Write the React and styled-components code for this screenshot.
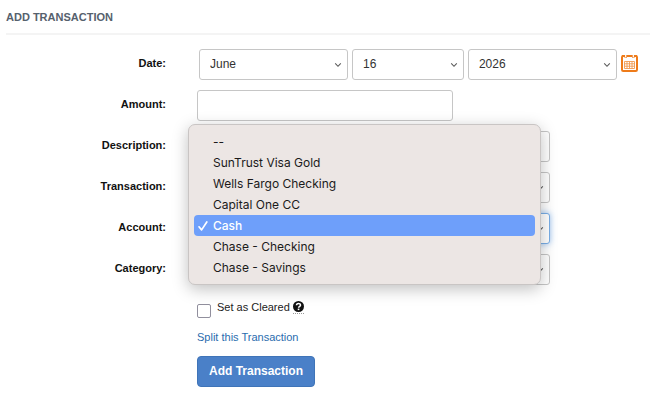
import React, { useState } from 'react'
import styled, { createGlobalStyle } from 'styled-components'

const accounts = [
  '--',
  'SunTrust Visa Gold',
  'Wells Fargo Checking',
  'Capital One CC',
  'Cash',
  'Chase - Checking',
  'Chase - Savings',
]

const months = ['January', 'February', 'March', 'April', 'May', 'June', 'July',
  'August', 'September', 'October', 'November', 'December']
const days = Array.from({ length: 31 }, (_, i) => String(i + 1))
const years = ['2024', '2025', '2026', '2027']

const Chevron = () => (
  <svg width="8" height="6" viewBox="0 0 8 6" fill="none" stroke="#5a5a5a" strokeWidth="1.1" aria-hidden="true">
    <path d="M1.2 1.3L4 4.3L6.8 1.3" />
  </svg>
)

const CalendarIcon = () => (
  <svg width="17" height="17" viewBox="0 0 17 17" aria-hidden="true">
    <rect x="1" y="1" width="15" height="15" rx="1.2" fill="#fff" stroke="#ee7b1a" strokeWidth="2" />
    <path d="M1 0H3.6V3H5.8V0H11.2V3H13.4V0H16V2H1Z" fill="#ee7b1a" />
    <path d="M4.1 0H5.3V2.4H4.1ZM11.7 0H12.9V2.4H11.7Z" fill="#fff" />
    <path d="M3.5 6.5H13.5V13.5H3.5ZM3.5 8.8H13.5M3.5 11.2H13.5M6 6.5V13.5M8.5 6.5V13.5M11 6.5V13.5" fill="none" stroke="#f19a50" strokeWidth="0.9" />
  </svg>
)

const CheckIcon = () => (
  <svg width="10" height="10" viewBox="0 0 10 10" fill="none" stroke="#fff" strokeWidth="1.7" strokeLinecap="round" strokeLinejoin="round" aria-hidden="true">
    <path d="M1 5.8L3.6 8.9L8.8 1" />
  </svg>
)

const HelpIcon = () => (
  <svg width="11" height="11" viewBox="0 0 10 10" aria-hidden="true">
    <circle cx="5" cy="5" r="5" fill="#111" />
    <path d="M3.2 3.9C3.2 1.7 6.8 1.7 6.8 3.8C6.8 5 5.1 4.9 5.1 6.2" fill="none" stroke="#fff" strokeWidth="1.4" />
    <rect x="4.3" y="6.9" width="1.5" height="1.4" fill="#fff" />
  </svg>
)

const Select = ({ id, label, options, grow, focused, ...rest }) => (
  <SelectWrap $grow={grow}>
    <SelectBox id={id} aria-label={label} $focused={focused} {...rest}>
      {options.map(option => <option key={option}>{option}</option>)}
    </SelectBox>
    <Arrow><Chevron /></Arrow>
  </SelectWrap>
)

const App = () => {
  const [account, setAccount] = useState('Cash')
  const [open, setOpen] = useState(true)

  const pick = (name) => {
    setAccount(name)
    setOpen(false)
  }

  return (
    <>
      <GlobalStyle />
      <Page>
        <Title>ADD TRANSACTION</Title>
        <Form onSubmit={e => e.preventDefault()}>
          <Row>
            <Label htmlFor="month">Date:</Label>
            <DateFields>
              <Select id="month" options={months} defaultValue="June" grow={4} />
              <Select label="Day" options={days} defaultValue="16" grow={3} />
              <Select label="Year" options={years} defaultValue="2026" grow={4} />
              <IconButton type="button" aria-label="Open calendar"><CalendarIcon /></IconButton>
            </DateFields>
          </Row>
          <Row>
            <Label htmlFor="amount">Amount:</Label>
            <Field $width="58%"><Input id="amount" type="text" /></Field>
          </Row>
          <Row>
            <Label htmlFor="description">Description:</Label>
            <Field><Input id="description" type="text" /></Field>
          </Row>
          <Row>
            <Label htmlFor="transaction">Transaction:</Label>
            <Field><Select id="transaction" options={['', 'Withdrawal', 'Deposit']} /></Field>
          </Row>
          <Row>
            <Label htmlFor="account">Account:</Label>
            <Field>
              <Select id="account" options={accounts} value={account} focused
                onChange={e => setAccount(e.target.value)} />
              {open && (
                <Menu role="listbox" aria-label="Account">
                  {accounts.map(name => (
                    <Option key={name} role="option" aria-selected={name === account}
                      $active={name === account} onClick={() => pick(name)}>
                      <Mark>{name === account && <CheckIcon />}</Mark>
                      {name}
                    </Option>
                  ))}
                </Menu>
              )}
            </Field>
          </Row>
          <Row>
            <Label htmlFor="category">Category:</Label>
            <Field><Select id="category" options={['', 'Groceries', 'Rent']} /></Field>
          </Row>
          <Actions>
            <Cleared>
              <Checkbox id="cleared" type="checkbox" />
              <label htmlFor="cleared">Set as Cleared</label>
              <Help title="Cleared transactions have posted to your account"><HelpIcon /></Help>
            </Cleared>
            <SplitLink href="#split">Split this Transaction</SplitLink>
            <Submit type="submit">Add Transaction</Submit>
          </Actions>
        </Form>
      </Page>
    </>
  )
}

export default App


const GlobalStyle = createGlobalStyle`
  * {
    box-sizing: border-box;
  }
  body {
    margin: 0;
    background: #fff;
    color: #222;
    font-family: "Liberation Sans", Arial, sans-serif;
    font-size: 11px;
  }
`

const Page = styled.main`
  padding: 10px 0 16px 6px;
`

const Title = styled.h1`
  margin: 0;
  padding-bottom: 9px;
  border-bottom: 2px solid #f4f4f4;
  color: #56616d;
  font-size: 11px;
  line-height: 14px;
`

const Form = styled.form`
  display: flex;
  flex-direction: column;
  gap: 10px;
  padding: 14px 12px 0 0;
`

const Row = styled.div`
  display: grid;
  grid-template-columns: 160px 1fr;
  column-gap: 31px;
`

const Label = styled.label`
  padding-top: 7px;
  color: #111;
  font-weight: bold;
  line-height: 14px;
  text-align: right;
`

const Field = styled.div`
  position: relative;
  width: ${props => props.$width || '80%'};
`

const DateFields = styled.div`
  display: flex;
  align-items: center;
  gap: 4px;
  padding-left: 2px;
`

const SelectWrap = styled.div`
  position: relative;
  flex: ${props => props.$grow || 1} 1 0;
`

const Input = styled.input`
  display: block;
  width: 100%;
  height: 31px;
  padding: 0 11px;
  border: 1px solid #c6c6c6;
  border-radius: 3px;
  background: #fff;
  color: #333;
  font-family: inherit;
  font-size: 12px;
`

const SelectBox = styled(Input).attrs({ as: 'select' })`
  appearance: none;
  padding: 0 20px 2px 10px;
  ${props => props.$focused && `
    border-color: #79aee6;
    box-shadow: 0 0 6px rgba(82, 150, 230, 0.6);
    outline: none;
  `}
`

const Arrow = styled.span`
  position: absolute;
  top: 0;
  bottom: 0;
  right: 6px;
  display: flex;
  align-items: center;
  pointer-events: none;
`

const IconButton = styled.button`
  display: flex;
  padding: 0 0 3px;
  border: 0;
  background: none;
  cursor: pointer;
`

const Menu = styled.ul`
  position: absolute;
  z-index: 1;
  top: -89px;
  left: -9px;
  width: 100%;
  margin: 0;
  padding: 6px 5px;
  border: 1px solid #c9c5c4;
  border-radius: 7px;
  background: #ece6e4;
  box-shadow: 0 4px 16px rgba(0, 0, 0, 0.25);
  list-style: none;
`

const Option = styled.li`
  display: flex;
  align-items: center;
  height: 21px;
  padding-left: 4px;
  border-radius: 4px;
  background: ${props => props.$active ? '#6e9ffa' : 'transparent'};
  color: ${props => props.$active ? '#fff' : '#1b1a1a'};
  font-family: Inter, sans-serif;
  font-size: 12px;
  font-weight: ${props => props.$active ? 500 : 400};
  cursor: default;
`

const Mark = styled.span`
  display: flex;
  width: 15px;
`

const Actions = styled.div`
  display: flex;
  flex-direction: column;
  align-items: flex-start;
  padding: 5px 0 0 191px;
`

const Cleared = styled.div`
  display: flex;
  align-items: flex-start;
  line-height: 14px;
`

const Checkbox = styled.input`
  appearance: none;
  width: 14px;
  height: 14px;
  margin: 4px 6px 0 0;
  border: 1px solid #918f9d;
  border-radius: 2px;
  background: #fff;

  &:checked {
    background: #4a80c8;
  }
`

const Help = styled.span`
  display: flex;
  margin: 1px 0 0 3px;
  padding-bottom: 1px;
  border-bottom: 1px dotted #999;
`

const SplitLink = styled.a`
  margin-top: 12px;
  color: #2a6cae;
  line-height: 14px;
  text-decoration: none;
`

const Submit = styled.button`
  height: 31px;
  margin-top: 12px;
  padding: 0 11px 2px;
  border: 1px solid #3f74b8;
  border-radius: 4px;
  background: #4a80c8;
  color: #fff;
  font-family: inherit;
  font-size: 12px;
  font-weight: bold;
  cursor: pointer;
`
